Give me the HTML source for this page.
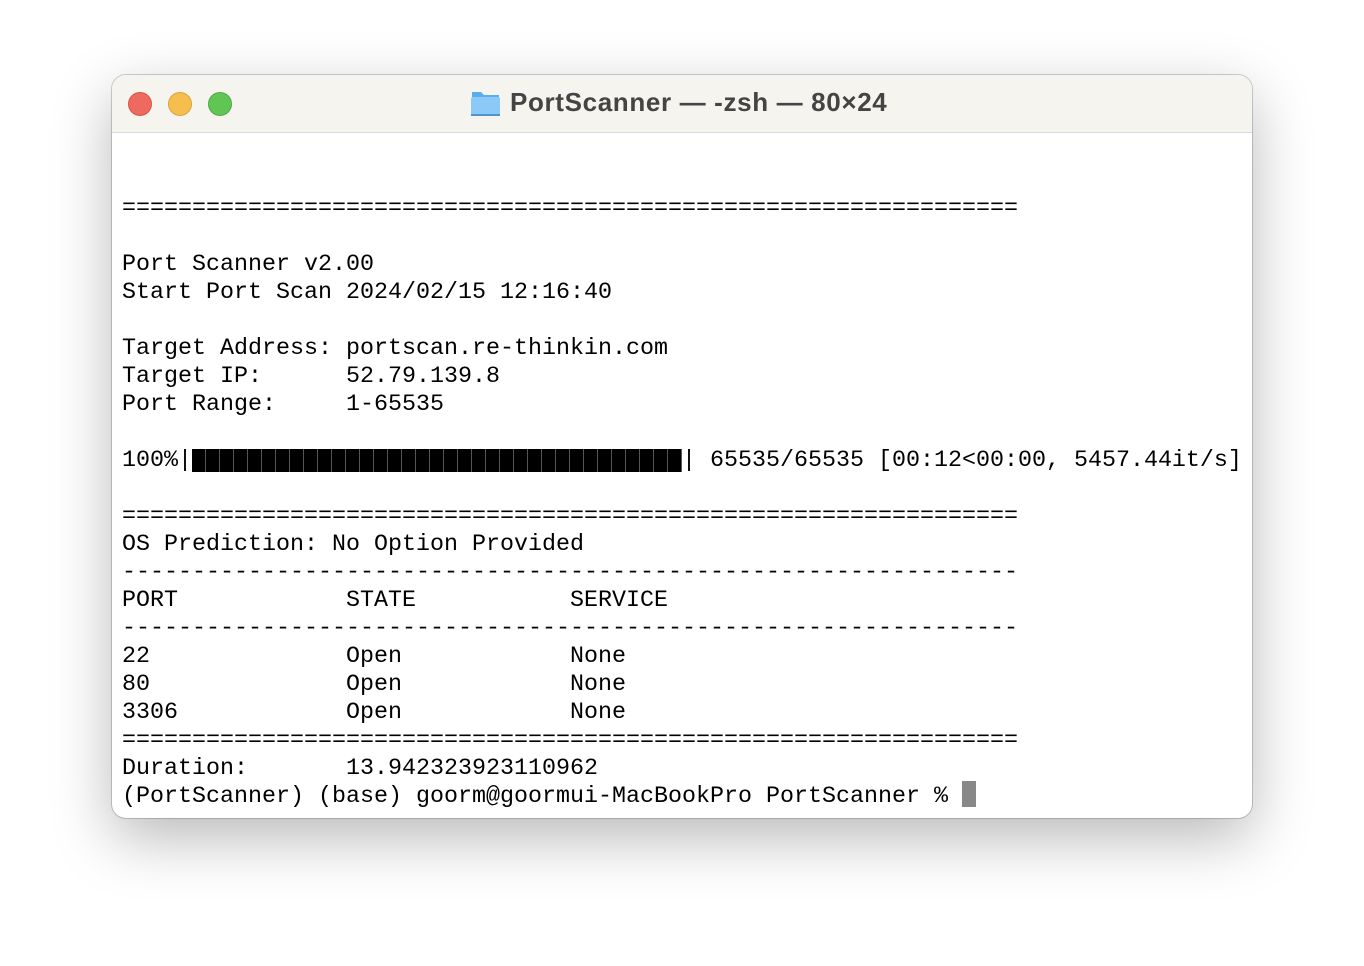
<!DOCTYPE html>
<html><head><meta charset="utf-8"><style>
body{margin:0;width:1364px;height:966px;background:#fff;position:relative;overflow:hidden}
.win{position:absolute;left:112px;top:75px;width:1140px;height:743px;border-radius:14px;background:#fff;box-shadow:0 20px 60px rgba(0,0,0,.28),0 0 0 1px rgba(0,0,0,.18);overflow:hidden}
.tb{position:absolute;left:0;top:0;width:100%;height:57px;background:#f6f4ef;border-bottom:1px solid #dcdad6}
.dot{position:absolute;top:17px;width:24px;height:24px;border-radius:50%}
.title{position:absolute;left:398px;top:12px;font:bold 26px "Liberation Sans",sans-serif;color:#444;letter-spacing:0.65px}
.t{position:absolute;left:10px;font:23.33px/28px "Liberation Mono",monospace;color:#000;white-space:pre}
</style></head><body>
<div class="win">
<div class="tb">
<div class="dot" style="left:16px;background:#ee6a5e;border:1px solid #d55448;width:22px;height:22px"></div>
<div class="dot" style="left:56px;background:#f6be4f;border:1px solid #d9a33a;width:22px;height:22px"></div>
<div class="dot" style="left:96px;background:#61c554;border:1px solid #4ea845;width:22px;height:22px"></div>
<svg style="position:absolute;left:358px;top:13px" width="31" height="30" viewBox="0 0 31 30"><path d="M2 4h9l3 3h15v20H2z" fill="#5aaef0"/><rect x="1" y="9" width="29" height="19" rx="2" fill="#8cc9f7"/><rect x="1" y="26" width="29" height="2" fill="#4f94d0"/></svg>
<div class="title">PortScanner — -zsh — 80×24</div>
</div>
<div class="t" style="top:120px">================================================================</div>
<div class="t" style="top:176px">Port Scanner v2.00
Start Port Scan 2024/02/15 12:16:40

Target Address: portscan.re-thinkin.com
Target IP:      52.79.139.8
Port Range:     1-65535

100%|                                   | 65535/65535 [00:12&lt;00:00, 5457.44it/s]

================================================================
OS Prediction: No Option Provided
----------------------------------------------------------------
PORT            STATE           SERVICE
----------------------------------------------------------------
22              Open            None
80              Open            None
3306            Open            None
================================================================
Duration:       13.942323923110962
(PortScanner) (base) goorm@goormui-MacBookPro PortScanner % </div>
<div style="position:absolute;left:80px;top:374px;width:490px;height:23px;background:repeating-linear-gradient(90deg,#000 0 13px,#555 13px 14px)"></div>
<div style="position:absolute;left:850px;top:706px;width:14px;height:26px;background:#888"></div>
</div>
</body></html>
